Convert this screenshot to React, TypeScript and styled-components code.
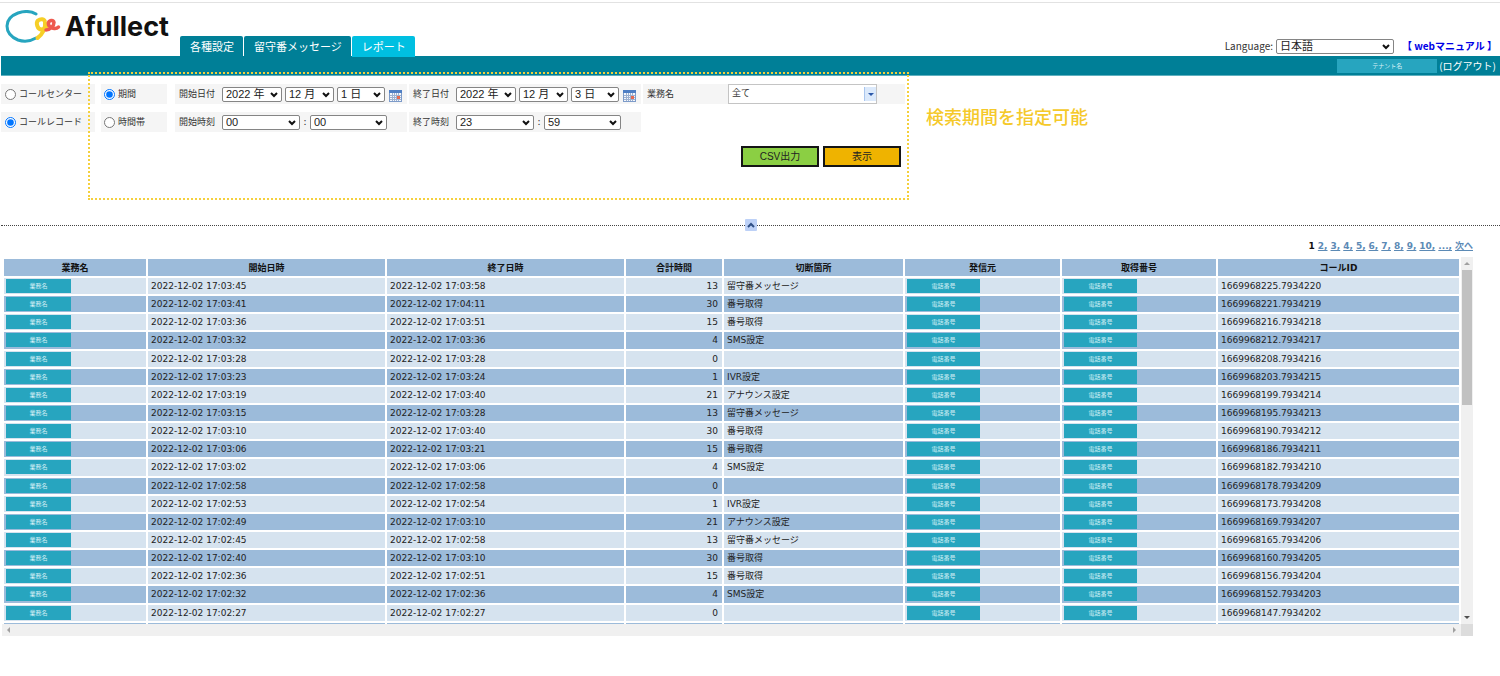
import React from 'react';
import styled, { createGlobalStyle } from 'styled-components';

const JP = '"Noto Sans CJK JP", sans-serif';
const UI = '"Liberation Sans", "Noto Sans CJK JP", sans-serif';
const DATA = '"DejaVu Sans", "Noto Sans CJK JP", sans-serif';

const GlobalStyle = createGlobalStyle`
  * { box-sizing: border-box; }
  body { margin: 0; background: #fff; color: #333; font-family: ${JP}; font-size: 9px; line-height: 12px; }
  a { text-decoration: none; }
`;

const Page = styled.div`
  padding-top: 2px;
`;

const Header = styled.header`
  display: flex;
  align-items: flex-end;
  height: 54px;
  border-top: 1px solid #e2e2e2;
  padding-left: 5px;
`;

const Brand = styled.a`
  display: flex;
  align-items: center;
  gap: 4px;
  width: 175px;
  height: 53px;
  padding-bottom: 5px;
  color: #111;
  font: 700 27px/32px Inter, sans-serif;
`;

const Tabs = styled.nav`
  display: flex;
  flex: 1;
  gap: 1px;
  height: 20px;
`;

const Tab = styled.a<{ $active?: boolean }>`
  height: ${p => (p.$active ? 21 : 20)}px;
  padding: 0 9px 0 10px;
  border-radius: 2px 2px 0 0;
  background: ${p => (p.$active ? '#00bfe1' : '#007f97')};
  color: #fff;
  font-size: 11px;
  line-height: 20px;
  white-space: nowrap;
  position: relative;
`;

const HeaderTools = styled.div`
  display: flex;
  align-items: center;
  gap: 3px;
  height: 20px;
  padding-right: 3px;
  font-size: 10px;
`;

const ManualLink = styled.a`
  margin-left: 5px;
  color: #0000e6;
  font-weight: 700;
  white-space: nowrap;
`;

const Band = styled.div`
  display: flex;
  align-items: center;
  justify-content: flex-end;
  gap: 2px;
  height: 20px;
  margin-left: 1px;
  padding-right: 4px;
  background: #007f97;
  border-bottom: 1px solid #5fb0bf;
  font-size: 10px;
`;

const Logout = styled.a`
  color: #fff;
`;

const Chip = styled.span<{ $w: number }>`
  display: block;
  width: ${p => p.$w}px;
  height: 14px;
  background: #27a5bf;
  color: #d4eff5;
  font: 6px/14px ${JP};
  text-align: center;
`;

const SelectBox = styled.span<{ $w: number }>`
  position: relative;
  display: inline-flex;
  width: ${p => p.$w}px;
  height: 15px;
  svg { position: absolute; right: 4px; top: 5px; pointer-events: none; }
`;

const NativeSelect = styled.select`
  appearance: none;
  width: 100%;
  height: 15px;
  margin: 0;
  padding: 0 0 0 3px;
  border: 1px solid #858585;
  border-radius: 2px;
  background: #fff;
  color: #222;
  font: 11px/13px ${UI};
`;

const SearchArea = styled.section`
  position: relative;
  height: 147px;
  padding: 8px 0 0 1px;
`;

const Form = styled.form`
  display: flex;
`;

const RadioColumn = styled.div<{ $w: number; $gap: number; $pad: number }>`
  display: flex;
  flex-direction: column;
  gap: 8px;
  width: ${p => p.$w}px;
  margin-right: ${p => p.$gap}px;
  label { padding-left: ${p => p.$pad}px; }
`;

const RadioLabel = styled.label`
  display: flex;
  align-items: center;
  gap: 3px;
  height: 20px;
  background: #f5f5f5;
  white-space: nowrap;
`;

const Radio = styled.input`
  width: 11px;
  height: 11px;
  margin: 0;
`;

const Fields = styled.div`
  width: 730px;
`;

const FieldRow = styled.div`
  display: flex;
  gap: 2px;
  margin-bottom: 8px;
`;

const Field = styled.div<{ $w?: number }>`
  display: flex;
  align-items: center;
  gap: 3px;
  width: ${p => p.$w ?? 232}px;
  height: 20px;
  padding-left: 4px;
  background: #f5f5f5;
`;

const FieldLabel = styled.label<{ $w?: number }>`
  width: ${p => p.$w ?? 40}px;
  white-space: nowrap;
`;

const Colon = styled.span`
  width: 4px;
  text-align: center;
`;

const IconButton = styled.button`
  display: flex;
  margin: 3px 0 0 1px;
  padding: 0;
  border: 0;
  background: none;
`;

const Combo = styled.div`
  display: flex;
  align-items: center;
  width: 149px;
  height: 20px;
  border: 1px solid #c4c4c4;
  background: #fff;
  input { flex: 1; min-width: 0; height: 18px; border: 0; padding: 0 3px 3px; background: none; color: #333; font: 9px/12px ${JP}; }
  button { display: flex; align-items: center; justify-content: center; width: 12px; height: 14px; padding: 0; border: 0; border-left: 1px solid #a9c6ee; background: #dbe9fb; }
`;

const Actions = styled.div`
  display: flex;
  justify-content: flex-end;
  gap: 4px;
  padding: 6px 4px 0 0;
`;

const ActionButton = styled.button<{ $bg: string }>`
  width: 78px;
  height: 21px;
  padding: 0;
  border: 2px solid #151515;
  background: ${p => p.$bg};
  color: #222;
  font: 10px/15px ${UI};
`;

const Highlight = styled.div`
  position: absolute;
  left: 88px;
  top: -4px;
  width: 821px;
  height: 128px;
  border: 2px dotted #f5d03c;
  pointer-events: none;
`;

const Callout = styled.p`
  margin: 18px 0 0 21px;
  color: #f5c92a;
  font-size: 18px;
  line-height: 28px;
  font-weight: 500;
  white-space: nowrap;
`;

const Divider = styled.div`
  display: flex;
  align-items: center;
  height: 4px;
  margin-left: 1px;
  &::before, &::after { content: ''; flex: 1; border-top: 1px dotted #444; }
`;

const Collapse = styled.button`
  display: flex;
  align-items: center;
  justify-content: center;
  width: 12px;
  height: 12px;
  padding: 0;
  border: 0;
  border-radius: 1px;
  background: #bdd1f7;
`;

const Pager = styled.nav`
  display: flex;
  justify-content: flex-end;
  gap: 3px;
  padding: 12px 27px 0 0;
  color: #111;
  font: 700 9px/14px ${DATA};
  a { color: #5c8ab5; text-decoration: underline; }
`;

const Scroller = styled.div`
  display: grid;
  grid-template-columns: 1fr 12px;
  grid-template-rows: 367px 12px;
  margin: 4px 27px 0 2px;
  background: #f0f0f0;
`;

const TableView = styled.div`
  overflow: hidden;
  background: #fff;
`;

const Table = styled.table`
  table-layout: fixed;
  width: 100%;
  height: 384px;
  border-spacing: 2px;
  color: #222;
  font: 9px/12px ${DATA};
`;

const HeadCell = styled.th`
  height: 17px;
  padding: 0;
  background: #9cbbda;
  color: #111;
`;

const Row = styled.tr<{ $dark: boolean }>`
  background: ${p => (p.$dark ? '#9cbbda' : '#d6e3ef')};
`;

const Cell = styled.td<{ $right?: boolean }>`
  height: 16px;
  padding: 0 4px 0 3px;
  text-align: ${p => (p.$right ? 'right' : 'left')};
  line-height: 14px;
  white-space: nowrap;
`;

const ChipCell = styled(Cell)`
  padding: 0 0 0 2px;
`;

const VBar = styled.div`
  display: flex;
  flex-direction: column;
  align-items: center;
  justify-content: space-between;
  padding: 4px 0;
`;

const Thumb = styled.div`
  width: 10px;
  height: 135px;
  margin: 3px 0 auto;
  background: #c1c1c1;
`;

const HBar = styled.div`
  display: flex;
  align-items: center;
  justify-content: space-between;
  padding: 0 4px;
`;

const Corner = styled.div`
  background: #dcdcdc;
`;

const LogoMark = () => (
  <svg width="56" height="34" viewBox="0 0 56 34" fill="none" strokeLinecap="round" strokeLinejoin="round" aria-hidden="true">
    <path d="M31 4C26 1 19 1 13 3C5 6 2 11 2 16C2 22 6 27 13 30C19 32 26 31 31 28" stroke="#27a5bf" strokeWidth="3" />
    <path d="M32.500 28C37 25 41 18 40 12C39.500 8.500 35.500 8.500 33 10.500C30.500 13 32.500 19 36 19.500C38 19.500 40 18.500 41.500 16.500" stroke="#f6cf27" strokeWidth="4" />
    <path d="M41 20C45 20 49 16 49 12.500C48.500 9.500 44.500 10 43.500 12.500C42.500 16 47 19 50 18.500C51.500 18.500 52.500 18 53.500 17" stroke="#ee5a4f" strokeWidth="3.500" />
  </svg>
);

const Chevron = () => (
  <svg width="8" height="6" viewBox="0 0 8 6" fill="none" stroke="#111" strokeWidth="2" aria-hidden="true">
    <path d="M1 1L4 4L7 1" />
  </svg>
);

const CalendarIcon = () => (
  <svg width="13" height="12" viewBox="0 0 13 12" aria-hidden="true">
    <rect x="0.5" y="0.5" width="12" height="11" fill="#f4f7fc" stroke="#7d9bc9" />
    <rect width="13" height="3" fill="#4f7fc4" />
    <path d="M1 5.5H12M1 7.5H12M1 9.5H12M3.5 3V11M5.5 3V11M7.500 3V11M9.500 3V11" stroke="#9db1d0" />
    <rect x="8" y="6" width="3" height="3" fill="#e5694f" />
  </svg>
);

const Arrow = ({ d, color = '#a0a0a0' }: { d: string; color?: string }) => (
  <svg width="6" height="6" viewBox="0 0 6 6" fill={color} aria-hidden="true"><path d={d} /></svg>
);

const Select = ({ label, value, w, id }: { label: string; value: string; w: number; id?: string }) => (
  <SelectBox $w={w}>
    <NativeSelect id={id} aria-label={label} defaultValue={value}><option>{value}</option></NativeSelect>
    <Chevron />
  </SelectBox>
);

const DateField = ({ id, label, day }: { id: string; label: string; day: string }) => (
  <Field>
    <FieldLabel htmlFor={id}>{label}</FieldLabel>
    <Select id={id} label={`${label} 年`} value="2022 年" w={60} />
    <Select label={`${label} 月`} value="12 月" w={49} />
    <Select label={`${label} 日`} value={day} w={48} />
    <IconButton type="button" aria-label={`${label} カレンダー`}><CalendarIcon /></IconButton>
  </Field>
);

const TimeField = ({ id, label, hour, minute }: { id: string; label: string; hour: string; minute: string }) => (
  <Field>
    <FieldLabel htmlFor={id}>{label}</FieldLabel>
    <Select id={id} label={`${label} 時`} value={hour} w={78} />
    <Colon>:</Colon>
    <Select label={`${label} 分`} value={minute} w={77} />
  </Field>
);

const columns: [string, number][] = [
  ['業務名', 142], ['開始日時', 237], ['終了日時', 237], ['合計時間', 96],
  ['切断箇所', 179], ['発信元', 155], ['取得番号', 154], ['コールID', 241],
];

const calls: [string, string, number, string, string][] = [
  ['17:03:45', '17:03:58', 13, '留守番メッセージ', '1669968225.7934220'],
  ['17:03:41', '17:04:11', 30, '番号取得', '1669968221.7934219'],
  ['17:03:36', '17:03:51', 15, '番号取得', '1669968216.7934218'],
  ['17:03:32', '17:03:36', 4, 'SMS設定', '1669968212.7934217'],
  ['17:03:28', '17:03:28', 0, '', '1669968208.7934216'],
  ['17:03:23', '17:03:24', 1, 'IVR設定', '1669968203.7934215'],
  ['17:03:19', '17:03:40', 21, 'アナウンス設定', '1669968199.7934214'],
  ['17:03:15', '17:03:28', 13, '留守番メッセージ', '1669968195.7934213'],
  ['17:03:10', '17:03:40', 30, '番号取得', '1669968190.7934212'],
  ['17:03:06', '17:03:21', 15, '番号取得', '1669968186.7934211'],
  ['17:03:02', '17:03:06', 4, 'SMS設定', '1669968182.7934210'],
  ['17:02:58', '17:02:58', 0, '', '1669968178.7934209'],
  ['17:02:53', '17:02:54', 1, 'IVR設定', '1669968173.7934208'],
  ['17:02:49', '17:03:10', 21, 'アナウンス設定', '1669968169.7934207'],
  ['17:02:45', '17:02:58', 13, '留守番メッセージ', '1669968165.7934206'],
  ['17:02:40', '17:03:10', 30, '番号取得', '1669968160.7934205'],
  ['17:02:36', '17:02:51', 15, '番号取得', '1669968156.7934204'],
  ['17:02:32', '17:02:36', 4, 'SMS設定', '1669968152.7934203'],
  ['17:02:27', '17:02:27', 0, '', '1669968147.7934202'],
];

const pages = ['2,', '3,', '4,', '5,', '6,', '7,', '8,', '9,', '10,', '...,', '次へ'];

export default function App() {
  return (
    <Page>
      <GlobalStyle />
      <Header>
        <Brand href="#"><LogoMark />Afullect</Brand>
        <Tabs>
          <Tab href="#">各種設定</Tab>
          <Tab href="#">留守番メッセージ</Tab>
          <Tab href="#" $active>レポート</Tab>
        </Tabs>
        <HeaderTools>
          <label htmlFor="language">Language:</label>
          <Select id="language" label="Language" value="日本語" w={118} />
          <ManualLink href="#">【 webマニュアル 】</ManualLink>
        </HeaderTools>
      </Header>
      <Band>
        <Chip $w={100}>テナント名</Chip>
        <Logout href="#">(ログアウト)</Logout>
      </Band>
      <SearchArea>
        <Form onSubmit={e => e.preventDefault()}>
          <RadioColumn $w={94} $gap={6} $pad={4}>
            <RadioLabel><Radio type="radio" name="kind" />コールセンター</RadioLabel>
            <RadioLabel><Radio type="radio" name="kind" defaultChecked />コールレコード</RadioLabel>
          </RadioColumn>
          <RadioColumn $w={66} $gap={8} $pad={3}>
            <RadioLabel><Radio type="radio" name="range" defaultChecked />期間</RadioLabel>
            <RadioLabel><Radio type="radio" name="range" />時間帯</RadioLabel>
          </RadioColumn>
          <Fields>
            <FieldRow>
              <DateField id="start-date" label="開始日付" day="1 日" />
              <DateField id="end-date" label="終了日付" day="3 日" />
              <Field $w={262}>
                <FieldLabel htmlFor="task" $w={78}>業務名</FieldLabel>
                <Combo>
                  <input id="task" defaultValue="全て" />
                  <button type="button" aria-label="業務名を選択"><Arrow d="M0 2H6L3 5Z" color="#2b57a8" /></button>
                </Combo>
              </Field>
            </FieldRow>
            <FieldRow>
              <TimeField id="start-time" label="開始時刻" hour="00" minute="00" />
              <TimeField id="end-time" label="終了時刻" hour="23" minute="59" />
            </FieldRow>
            <Actions>
              <ActionButton type="button" $bg="#8bcf43">CSV出力</ActionButton>
              <ActionButton type="submit" $bg="#efb300">表示</ActionButton>
            </Actions>
          </Fields>
          <Callout>検索期間を指定可能</Callout>
        </Form>
        <Highlight />
      </SearchArea>
      <Divider>
        <Collapse aria-label="検索条件を閉じる">
          <svg width="8" height="6" viewBox="0 0 8 6" fill="none" stroke="#2f4f86" strokeWidth="2" aria-hidden="true"><path d="M1 5L4 2L7 5" /></svg>
        </Collapse>
      </Divider>
      <Pager>
        <span>1</span>
        {pages.map(p => <a key={p} href="#">{p}</a>)}
      </Pager>
      <Scroller>
        <TableView>
          <Table>
            <colgroup>{columns.map(([name, w]) => <col key={name} width={w} />)}</colgroup>
            <thead><tr>{columns.map(([name]) => <HeadCell key={name} scope="col">{name}</HeadCell>)}</tr></thead>
            <tbody>
              {calls.map(([start, end, total, place, id], i) => (
                <Row key={id} $dark={i % 2 === 1}>
                  <ChipCell><Chip $w={65}>業務名</Chip></ChipCell>
                  <Cell>2022-12-02 {start}</Cell>
                  <Cell>2022-12-02 {end}</Cell>
                  <Cell $right>{total}</Cell>
                  <Cell>{place}</Cell>
                  <ChipCell><Chip $w={73}>電話番号</Chip></ChipCell>
                  <ChipCell><Chip $w={73}>電話番号</Chip></ChipCell>
                  <Cell>{id}</Cell>
                </Row>
              ))}
              <Row $dark>{columns.map(([name]) => <Cell key={name} />)}</Row>
            </tbody>
          </Table>
        </TableView>
        <VBar aria-hidden="true">
          <Arrow d="M0 4H6L3 1Z" />
          <Thumb />
          <Arrow d="M0 2H6L3 5Z" color="#505050" />
        </VBar>
        <HBar aria-hidden="true">
          <Arrow d="M4 0V6L1 3Z" />
          <Arrow d="M2 0V6L5 3Z" />
        </HBar>
        <Corner />
      </Scroller>
    </Page>
  );
}
